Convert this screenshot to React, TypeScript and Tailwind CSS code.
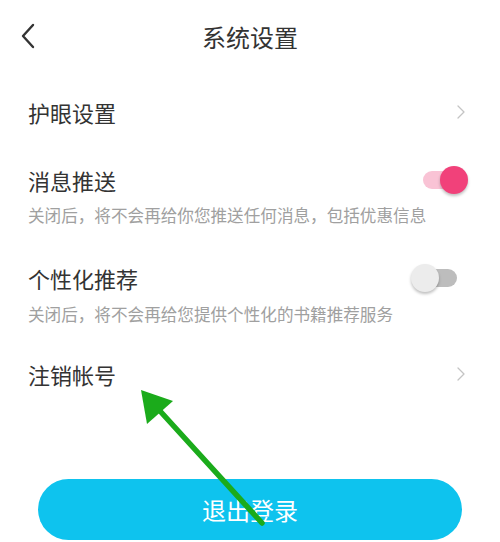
import React from "react";

const font = { fontFamily: '"Noto Sans CJK SC", "Noto Sans", sans-serif' };

function SmallChevron() {
  return (
    <svg width="8" height="14" viewBox="0 0 8 14" fill="none" className="mr-[35px]">
      <path d="M1 1l6 6-6 6" stroke="#c4c4c4" strokeWidth="1.3" strokeLinecap="round" strokeLinejoin="round" />
    </svg>
  );
}

function ToggleOn() {
  return (
    <div className="relative mr-[32px] h-[28px] w-[45px]">
      <div className="absolute left-0 top-[5px] h-[18px] w-[36px] rounded-full bg-[#f9c3d5]" />
      <div className="absolute right-0 top-0 h-[28px] w-[28px] rounded-full bg-[#f1417a] shadow-[0_2px_3px_rgba(0,0,0,0.25)]" />
    </div>
  );
}

function ToggleOff() {
  return (
    <div className="relative mr-[43px] h-[28px] w-[46px]">
      <div className="absolute right-0 top-[5px] h-[18px] w-[40px] rounded-full bg-[#bdbdbd]" />
      <div className="absolute left-0 top-0 h-[28px] w-[28px] rounded-full bg-[#ececec] shadow-[0_2px_3px_rgba(0,0,0,0.25)]" />
    </div>
  );
}

export default function App() {
  return (
    <div className="relative h-[542px] w-[500px] overflow-hidden bg-white text-[#333]" style={font}>
      <div className="relative flex h-[74px] items-center justify-center">
        <svg width="16" height="26" viewBox="0 0 16 26" fill="none" className="absolute left-[20px] top-[23px]">
          <path d="M13 2L3 13l10 11" stroke="#333" strokeWidth="2.4" strokeLinecap="round" strokeLinejoin="round" />
        </svg>
        <div className="text-[24px] leading-[30px] text-[#333]">系统设置</div>
      </div>

      <div className="flex h-[76px] items-center justify-between pl-[28px]">
        <div className="text-[22px] leading-[30px]">护眼设置</div>
        <SmallChevron />
      </div>

      <div className="pl-[28px] pt-[15px]">
        <div className="flex items-center justify-between">
          <div className="text-[22px] leading-[30px]">消息推送</div>
          <ToggleOn />
        </div>
        <div className="mt-[9px] text-[16.6px] leading-[22px] text-[#a0a0a0]">关闭后，将不会再给你您推送任何消息，包括优惠信息</div>
      </div>

      <div className="pl-[28px] pt-[37px]">
        <div className="flex items-center justify-between">
          <div className="text-[22px] leading-[30px]">个性化推荐</div>
          <ToggleOff />
        </div>
        <div className="mt-[10px] text-[16.6px] leading-[22px] text-[#a0a0a0]">关闭后，将不会再给您提供个性化的书籍推荐服务</div>
      </div>

      <div className="flex items-center justify-between pl-[28px] pt-[34px]">
        <div className="text-[22px] leading-[30px]">注销帐号</div>
        <SmallChevron />
      </div>

      <div className="mx-[38px] mt-[90px] flex h-[61px] items-center justify-center rounded-full bg-[#0ec3ee]">
        <span className="text-[24px] leading-[30px] text-white">退出登录</span>
      </div>

      <svg className="pointer-events-none absolute left-0 top-0" width="500" height="542" viewBox="0 0 500 542">
        <line x1="262" y1="523" x2="150" y2="400" stroke="#1bab1b" strokeWidth="5.5" strokeLinecap="round" />
        <polygon points="141,390 173,401 147,424" fill="#1bab1b" />
      </svg>
    </div>
  );
}
